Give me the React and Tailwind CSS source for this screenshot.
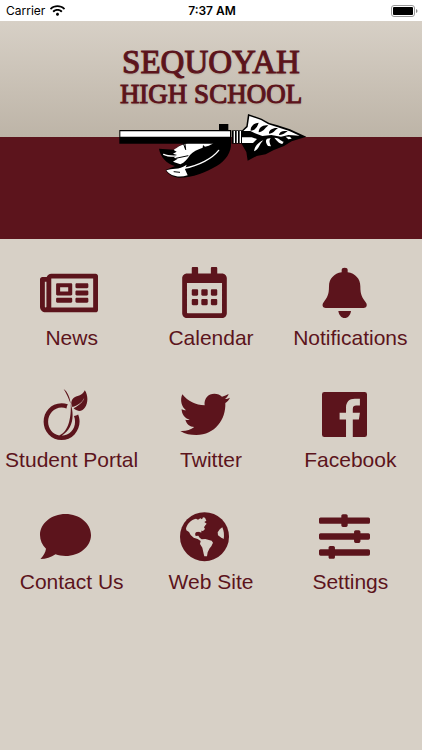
import {
  FaRegNewspaper,
  FaRegCalendarAlt,
  FaViadeo,
  FaSlidersH,
  FaWifi,
} from "react-icons/fa";

const BellIcon = (props) => (
  <svg viewBox="319 36 153 153" fill="currentColor" {...props}>
    <path d="M387 45Q387 38 396 38Q405 38 405 45V52C428 55 443 72 443 94C443 121 449 128 459 142C466 151 461 159 453 159H339C331 159 326 151 333 142C343 128 349 121 349 94C349 72 364 55 387 52Z" />
    <path d="M377 168H415C413 181 406 189 396 189C386 189 379 181 377 168Z" />
  </svg>
);

const TwitterIcon = (props) => (
  <svg viewBox="20 21 153 153" fill="currentColor" {...props}>
    <path d="M30 37C47 58 70 69 97 70C94 49 108 35 126 35C136 35 143 38 149 44C156 42 163 39 169 36C167 42 163 47 158 51C163 51 168 49 173 47C170 53 165 59 159 63C161 112 128 159 72 159C55 159 38 156 24 147C41 148 54 144 66 135C52 134 43 126 39 113C44 114 48 114 52 113C37 109 28 97 28 81C32 84 37 85 41 85C28 75 22 54 30 37Z" />
  </svg>
);

const FacebookIcon = (props) => (
  <svg viewBox="0 0 133 133" fill="currentColor" {...props}>
    <path d="M7 0H126Q133 0 133 7V126Q133 133 126 133H91V81H109L112 61H91V50C91 43 95 40 101 40H112V20H97C80 20 71 30 71 46V61H52V81H71V133H7Q0 133 0 126V7Q0 0 7 0Z" />
  </svg>
);

const CommentIcon = (props) => (
  <svg viewBox="0 0 51 51" fill="currentColor" {...props}>
    <path d="M25.500 3C39.600 3 51 12.400 51 24S39.600 45 25.500 45C22 45 18.500 44.400 15.500 43.300C11 46.500 6 48 .5 48C3.500 45 5.500 41.500 6 37.800C2.200 34 0 29.200 0 24C0 12.400 11.400 3 25.500 3Z" />
  </svg>
);

const GlobeIcon = (props) => (
  <svg viewBox="20 18 153 153" {...props}>
    <circle cx="96.500" cy="95" r="73.500" fill="currentColor" />
    <g fill="#d7d0c6">
      <path d="M41 70C45 56 56 44 71 41L77 44L84 40L89 43L92 37L98 38L102 47L96 51L103 56L99 61L95 67L98 72L92 78L86 77L88 82L80 83L74 80L68 86L70 93L78 92L82 98L88 103L99 102L118 107L122 113L117 124L112 130L106 142L104 154L96 154L94 146L90 128L83 117L85 108L76 102L64 98L55 90L50 81L42 76Z" />
      <path d="M150 67C155 78 156 91 154 102L145 97L137 91L136 82L143 72Z" />
    </g>
    <path d="M69 83L80 80L87 85L85 89L74 87Z" fill="currentColor" />
  </svg>
);

const items = [
  { label: "News", icon: FaRegNewspaper, size: "mr-[6px] h-[58px] w-[58px]" },
  { label: "Calendar", icon: FaRegCalendarAlt, size: "mr-3 h-[51px] w-[51px]" },
  { label: "Notifications", icon: BellIcon, size: "mr-3 h-[51px] w-[51px]" },
  { label: "Student Portal", icon: FaViadeo, size: "mr-3 h-[51px] w-[51px]" },
  { label: "Twitter", icon: TwitterIcon, size: "mr-3 h-[51px] w-[51px]" },
  { label: "Facebook", icon: FacebookIcon, size: "mr-3 h-[45px] w-[45px]" },
  { label: "Contact Us", icon: CommentIcon, size: "mr-3 h-[51px] w-[51px]" },
  { label: "Web Site", icon: GlobeIcon, size: "mr-3 h-[51px] w-[51px]" },
  { label: "Settings", icon: FaSlidersH, size: "mr-3 h-[51px] w-[51px]" },
];

const StatusBar = () => (
  <div className="grid h-[21px] grid-cols-3 items-center bg-white pr-1 pl-[6px] font-['Inter',sans-serif] text-[12px] text-black">
    <div className="flex items-center gap-[5px]">
      <span>Carrier</span>
      <FaWifi className="h-[15px] w-[15px]" />
    </div>
    <span className="text-center font-semibold">7:37 AM</span>
    <div className="flex justify-end">
      <svg viewBox="0 0 27 12" className="h-[12px] w-[27px]">
        <rect x="0.5" y="0.5" width="23" height="11" rx="2.500" fill="#fff" stroke="#999" />
        <rect x="2" y="2" width="20" height="8" rx="1" fill="#000" />
        <path d="M25 4v4q1.500-.6 1.500-2T25 4Z" fill="#888" />
      </svg>
    </div>
  </div>
);

const Spear = () => (
  <svg viewBox="42 233 564 198" className="h-[66px] w-[188px]">
    {/* feathers */}
    <path d="M378 322C380 350 362 376 335 392C302 412 260 428 220 427C202 425 188 416 182 404L210 392C184 384 166 365 162 340L208 343C228 325 260 312 300 310L342 322Z" fill="#000" />
    <path d="M206 344C226 328 250 316 336 310C330 322 316 331 300 334L294 329L293 337C277 342 264 349 255 359C247 371 239 382 226 387L204 379L218 370L207 367L216 359L204 355L215 349Z" fill="#fff" />
    <path d="M184 405C200 398 221 405 245 388L240 402L248 420C222 428 196 423 184 405Z" fill="#fff" />
    <path d="M176 357C196 367 220 362 245 359M236 399C282 391 322 369 341 345" fill="none" stroke="#fff" strokeWidth="4" strokeLinecap="round" />
    <path d="M235 324L242 343L240 326M212 369L250 361M206 409L225 411M280 402L284 414M340 372L342 386" fill="none" stroke="#000" strokeWidth="3" />
    {/* shaft */}
    <path d="M342 266H370V286H342ZM43 284H379V325H43Z" fill="#000" />
    <path d="M46 288H375V304H46Z" fill="#fff" />
    <path d="M381 285H411V325H381Z" fill="#000" />
    <path d="M386 287H390V323H386ZM395 287H399V323H395ZM404 287H408V323H404Z" fill="#fff" />
    {/* stone head */}
    <path d="M429 236L470 250L493 263L518 270L555 282L604 304L560 318L537 332L505 345L482 357L455 362L428 376L424 350L410 326V286L424 272Z" fill="#000" />
    <path d="M433 242L468 254L490 267L516 275L553 287L584 301L550 299L528 304L499 299L472 302L450 294L436 287H415L428 275Z" fill="#fff" />
    <path d="M411 306H440L456 311L444 323H411Z" fill="#fff" />
    <path d="M461 262C446 263 436 273 437 286C449 286 457 275 461 262ZM490 270C473 267 461 277 461 291C473 291 480 279 490 270ZM519 278C503 276 490 285 492 295C505 295 509 285 519 278ZM548 288C533 285 523 290 522 299C533 300 539 293 548 288Z" fill="#000" />
    <path d="M475 315C459 321 449 334 447 348C461 344 463 326 475 315ZM497 309C481 308 479 319 489 332L498 333C494 323 491 316 497 309ZM508 307C514 315 523 325 532 326L536 319C526 317 523 307 508 307ZM542 304L550 312L560 310L555 304Z" fill="#fff" />
  </svg>
);

const Header = () => (
  <header className="bg-[linear-gradient(#d7d0c6_0px,#bdb4a7_116px,#5c141c_116px)] pb-[60px]">
    <div className="flex flex-col items-center pt-[23px] text-[#5c141c]">
      <h1 className="flex flex-col items-center font-['Liberation_Serif',serif] font-normal [-webkit-text-stroke:1px_#5c141c] [text-shadow:0_1px_2px_#a09080]">
        <span className="text-[33px] leading-[36px]">SEQUOYAH</span>
        <span className="text-[27px] leading-[28px]">HIGH SCHOOL</span>
      </h1>
      <div className="mt-[5px] pl-1">
        <Spear />
      </div>
    </div>
  </header>
);

const App = () => {
  return (
    <div className="min-h-screen bg-[#d7d0c6] font-['Liberation_Sans',sans-serif]">
      <StatusBar />
      <Header />
      <nav className="grid grid-cols-3 gap-y-[39px] px-[2px] pt-7">
        {items.map(({ label, icon: Icon, size }) => (
          <button
            key={label}
            type="button"
            className="flex flex-col items-center text-[#5c141c]"
          >
            <span className="flex h-[51px] items-center justify-center">
              <Icon className={size} aria-hidden="true" />
            </span>
            <span className="mt-2 text-[21px] leading-[24px] whitespace-nowrap">{label}</span>
          </button>
        ))}
      </nav>
    </div>
  );
};

export default App;
